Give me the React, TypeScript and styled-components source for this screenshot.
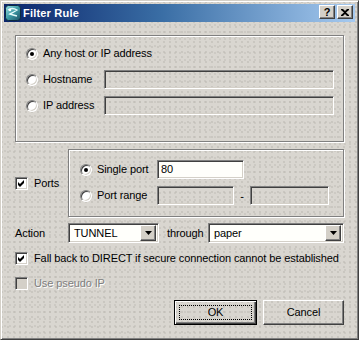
import React from "react";
import styled, { createGlobalStyle, css } from "styled-components";

const FACE = "#d4d0c8";

const Global = createGlobalStyle`
  html, body { margin: 0; padding: 0; background: #d7d4ce; }
  body { font-family: "Liberation Sans", Arial, sans-serif; font-size: 11px; color: #000; letter-spacing: -0.1px; }
  * { box-sizing: border-box; }
`;

const texture = css`
  background-color: #d9d6d0;
  background-image:
    radial-gradient(circle at 1px 1px, #bab6af 0.5px, transparent 0.9px),
    radial-gradient(circle at 1px 1px, #c0bcb5 0.5px, transparent 0.9px);
  background-size: 6px 5px, 5px 7px;
  background-position: 0 0, 3px 2px;
`;

const sunken = css`
  border: 1px solid;
  border-color: #808080 #fff #fff #808080;
  box-shadow: inset 1px 1px #404040, inset -1px -1px ${FACE};
`;

const raised = css`
  border: 1px solid;
  border-color: #fff #404040 #404040 #fff;
  box-shadow: inset -1px -1px #808080;
`;

const Window = styled.div`
  width: 359px;
  height: 340px;
  border: 1px solid;
  border-color: ${FACE} #404040 #404040 ${FACE};
  box-shadow: inset 1px 1px #fff, inset -1px -1px #808080;
  padding: 3px;
  display: flex;
  flex-direction: column;
  ${texture}
`;

const TitleBar = styled.div`
  height: 18px;
  flex-shrink: 0;
  display: flex;
  align-items: center;
  padding: 0 2px 0 1px;
  background: linear-gradient(to right, #0a246a 0%, #3a6ea5 45%, #a6caf0 100%);
`;

const Title = styled.span`
  margin-left: 2px;
  color: #fff;
  font-weight: bold;
  font-size: 11px;
  letter-spacing: 0.2px;
`;

const TitleButtons = styled.div`
  margin-left: auto;
  display: flex;
  gap: 2px;
  align-self: flex-start;
  margin-top: 1px;
`;

const TitleButton = styled.div`
  width: 16px;
  height: 14px;
  background: ${FACE};
  ${raised}
  display: flex;
  align-items: center;
  justify-content: center;
  font-weight: bold;
  font-size: 11px;
  line-height: 1;
`;

const Body = styled.div`
  flex: 1;
  display: flex;
  flex-direction: column;
  padding: 13px 11px 0 11px;
`;

const GroupBox = styled.div<{ $h: number }>`
  height: ${(p) => p.$h}px;
  border: 1px solid #808080;
  box-shadow: inset 1px 1px #fff, 1px 1px #fff;
`;

const HostGrid = styled.div`
  display: grid;
  grid-template-columns: 78px 1fr;
  grid-auto-rows: 19px;
  row-gap: 7px;
  align-items: center;
  padding: 8px 9px 0 10px;
`;

const FullRow = styled.div`
  grid-column: 1 / -1;
  display: flex;
  align-items: center;
`;

const RadioLabel = styled.label`
  display: flex;
  align-items: center;
  gap: 5px;
  white-space: nowrap;
  line-height: 13px;
`;

const RadioCircle = styled.span<{ $checked?: boolean }>`
  position: relative;
  flex-shrink: 0;
  width: 12px;
  height: 12px;
  border-radius: 50%;
  border: 1px solid;
  border-color: #808080 #fff #fff #808080;
  background: #fff;
  box-shadow: inset 1px 1px #404040, inset -1px -1px ${FACE};
  ${(p) =>
    p.$checked &&
    css`
      &::after {
        content: "";
        position: absolute;
        left: 3px;
        top: 3px;
        width: 4px;
        height: 4px;
        border-radius: 50%;
        background: #000;
      }
    `}
`;

const TextField = styled.div<{ $w?: number; $disabled?: boolean }>`
  height: 19px;
  ${(p) => (p.$w ? `width: ${p.$w}px;` : "")}
  ${sunken}
  background: ${(p) => (p.$disabled ? "transparent" : "#fffffb")};
  padding: 2px 3px;
  line-height: 13px;
`;

const PortsRow = styled.div`
  display: flex;
  align-items: center;
  margin-top: 7px;
`;

const PortsCheckCell = styled.div`
  width: 53px;
`;

const PortGroup = styled(GroupBox)`
  flex: 1;
`;

const PortGrid = styled.div`
  display: grid;
  grid-template-columns: 77px auto;
  grid-auto-rows: 19px;
  row-gap: 7px;
  align-items: center;
  padding: 10px 0 0 11px;
`;

const RangeFields = styled.div`
  display: flex;
  align-items: center;
`;

const Dash = styled.span`
  width: 16px;
  text-align: center;
`;

const CheckLabel = styled.label<{ $disabled?: boolean }>`
  display: flex;
  align-items: center;
  gap: 6px;
  height: 13px;
  white-space: nowrap;
  line-height: 13px;
  ${(p) =>
    p.$disabled &&
    css`
      color: #808080;
      text-shadow: 1px 1px #fff;
    `}
`;

const CheckBox = styled.span<{ $disabled?: boolean }>`
  flex-shrink: 0;
  width: 13px;
  height: 13px;
  ${sunken}
  background: ${(p) => (p.$disabled ? FACE : "#fff")};
  display: flex;
  align-items: center;
  justify-content: center;
`;

const ActionRow = styled.div`
  display: flex;
  align-items: center;
  height: 20px;
  margin-top: 6px;
`;

const RowLabel = styled.span<{ $w: number; $ml?: number }>`
  width: ${(p) => p.$w}px;
  margin-left: ${(p) => p.$ml ?? 0}px;
  white-space: nowrap;
`;

const Combo = styled.div<{ $w?: number }>`
  height: 20px;
  ${(p) => (p.$w ? `width: ${p.$w}px;` : "flex: 1;")}
  ${sunken}
  background: #fffffb;
  display: flex;
  align-items: center;
  padding: 2px 2px 2px 5px;
  line-height: 13px;
`;

const ComboText = styled.span`
  flex: 1;
`;

const ComboButton = styled.span`
  width: 16px;
  height: 16px;
  background: ${FACE};
  ${raised}
  display: flex;
  align-items: center;
  justify-content: center;
`;

const CheckRow = styled.div<{ $mt: number }>`
  margin-top: ${(p) => p.$mt}px;
`;

const ButtonRow = styled.div`
  display: flex;
  justify-content: flex-end;
  gap: 6px;
  margin-top: 10px;
`;

const PushButton = styled.div<{ $w: number; $default?: boolean }>`
  width: ${(p) => p.$w}px;
  height: 25px;
  display: flex;
  padding: 4px;
  ${(p) =>
    p.$default
      ? css`
          border: 1px solid #000;
          box-shadow: inset 1px 1px #fff, inset -1px -1px #404040, inset -2px -2px #808080;
        `
      : css`
          ${raised}
        `}
`;

const FocusRect = styled.span<{ $focus?: boolean }>`
  flex: 1;
  display: flex;
  align-items: center;
  justify-content: center;
  border: 1px ${(p) => (p.$focus ? "dotted #000" : "solid transparent")};
  line-height: 13px;
`;

const AppIcon = () => (
  <svg width="16" height="16" viewBox="0 0 16 16">
    <defs>
      <linearGradient id="ig" x1="0" y1="0" x2="1" y2="1">
        <stop offset="0" stopColor="#9fe3e6" />
        <stop offset="0.5" stopColor="#3d9aa5" />
        <stop offset="1" stopColor="#1b4f63" />
      </linearGradient>
    </defs>
    <rect x="0.5" y="0.5" width="15" height="15" rx="3" fill="url(#ig)" stroke="#0d2a40" />
    <path d="M3 5 Q7 2 12 5 Q9 7 5 9 Q8 10 12 11" fill="none" stroke="#e6fbfb" strokeWidth="1.4" />
    <circle cx="5" cy="5" r="1.2" fill="#ffffff" />
  </svg>
);

const CloseGlyph = () => (
  <svg width="8" height="7" viewBox="0 0 8 7">
    <path d="M0 0h2l2 2 2-2h2v1L5 3.5 8 6v1H6L4 5 2 7H0V6l3-2.5L0 1z" fill="#000" />
  </svg>
);

const CheckGlyph = () => (
  <svg width="7" height="7" viewBox="0 0 7 7">
    <path d="M0 2 L2 4 L6 0 L6 3 L2 7 L0 5 Z" fill="#000" />
  </svg>
);

const ArrowGlyph = () => (
  <svg width="7" height="4" viewBox="0 0 7 4">
    <path d="M0 0 H7 L3.5 4 Z" fill="#000" />
  </svg>
);

const Radio = ({ label, checked }: { label: string; checked?: boolean }) => (
  <RadioLabel>
    <RadioCircle $checked={checked} />
    {label}
  </RadioLabel>
);

const Check = ({ label, checked, disabled }: { label: string; checked?: boolean; disabled?: boolean }) => (
  <CheckLabel $disabled={disabled}>
    <CheckBox $disabled={disabled}>{checked && <CheckGlyph />}</CheckBox>
    {label}
  </CheckLabel>
);

export default function App() {
  return (
    <>
      <Global />
      <Window>
        <TitleBar>
          <AppIcon />
          <Title>Filter Rule</Title>
          <TitleButtons>
            <TitleButton>?</TitleButton>
            <TitleButton>
              <CloseGlyph />
            </TitleButton>
          </TitleButtons>
        </TitleBar>
        <Body>
          <GroupBox $h={107}>
            <HostGrid>
              <FullRow>
                <Radio label="Any host or IP address" checked />
              </FullRow>
              <Radio label="Hostname" />
              <TextField $disabled />
              <Radio label="IP address" />
              <TextField $disabled />
            </HostGrid>
          </GroupBox>

          <PortsRow>
            <PortsCheckCell>
              <Check label="Ports" checked />
            </PortsCheckCell>
            <PortGroup $h={68}>
              <PortGrid>
                <Radio label="Single port" checked />
                <TextField $w={87}>80</TextField>
                <Radio label="Port range" />
                <RangeFields>
                  <TextField $w={77} $disabled />
                  <Dash>-</Dash>
                  <TextField $w={79} $disabled />
                </RangeFields>
              </PortGrid>
            </PortGroup>
          </PortsRow>

          <ActionRow>
            <RowLabel $w={53}>Action</RowLabel>
            <Combo $w={91}>
              <ComboText>TUNNEL</ComboText>
              <ComboButton>
                <ArrowGlyph />
              </ComboButton>
            </Combo>
            <RowLabel $w={41} $ml={8}>
              through
            </RowLabel>
            <Combo>
              <ComboText>paper</ComboText>
              <ComboButton>
                <ArrowGlyph />
              </ComboButton>
            </Combo>
          </ActionRow>

          <CheckRow $mt={9}>
            <Check label="Fall back to DIRECT if secure connection cannot be established" checked />
          </CheckRow>
          <CheckRow $mt={12}>
            <Check label="Use pseudo IP" disabled />
          </CheckRow>

          <ButtonRow>
            <PushButton $w={83} $default>
              <FocusRect $focus>OK</FocusRect>
            </PushButton>
            <PushButton $w={81}>
              <FocusRect>Cancel</FocusRect>
            </PushButton>
          </ButtonRow>
        </Body>
      </Window>
    </>
  );
}
